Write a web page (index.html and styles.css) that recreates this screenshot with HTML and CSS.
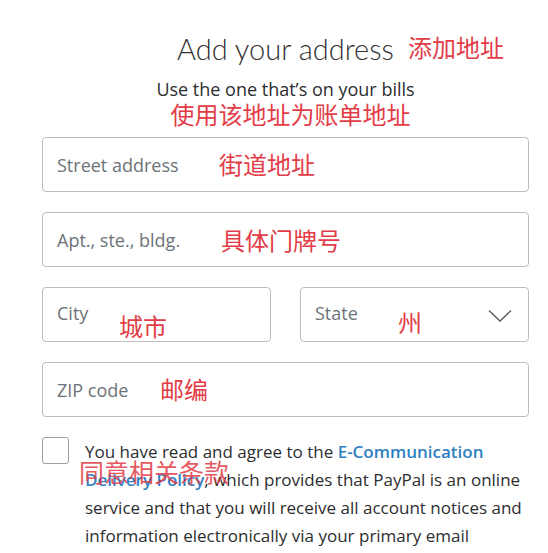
FILE: index.html
```html
<!DOCTYPE html>
<html>
  <head>
    <title>Add your address</title>
    <meta charset="UTF-8">
    <link rel="stylesheet" href="styles.css">
  </head>
  <body>
    <div class="container">
      <div class="header">
        <h1 class="title">Add your address<span class="note note-title">添加地址</span></h1>
        <p class="subtitle">Use the one that’s on your bills</p>
        <p class="note-sub">使用该地址为账单地址</p>
      </div>

      <div class="field">
        <span class="placeholder">Street address</span>
        <span class="note note-street">街道地址</span>
      </div>
      <div class="field">
        <span class="placeholder">Apt., ste., bldg.</span>
        <span class="note note-apt">具体门牌号</span>
      </div>
      <div class="row">
        <div class="field">
          <span class="placeholder">City</span>
          <span class="note note-city">城市</span>
        </div>
        <div class="field field-select">
          <span class="placeholder">State</span>
          <span class="note note-state">州</span>
          <svg class="chevron" width="24" height="14" viewBox="0 0 24 14">
            <polyline points="1,1.5 12,12 23,1.5" fill="none" stroke="#5a5a5a" stroke-width="1.4"/>
          </svg>
        </div>
      </div>
      <div class="field">
        <span class="placeholder">ZIP code</span>
        <span class="note note-zip">邮编</span>
      </div>

      <div class="agree">
        <span class="checkbox"></span>
        <p class="agree-text">You have read and agree to the <a href="#">E-Communication Delivery Policy</a>, which provides that PayPal is an online service and that you will receive all account notices and information electronically via your primary email</p>
        <span class="note note-agree">同意相关条款</span>
      </div>
    </div>
  </body>
</html>
```

FILE: styles.css
```css
body {
  margin: 0;
  padding: 0;
  background-color: #fff;
  font-family: "Open Sans", "Noto Sans", sans-serif;
  color: #2c2e2f;
}

.container {
  width: 487px;
  padding: 0 0 0 42px;
}

.header {
  text-align: center;
  padding-top: 31px;
  margin-bottom: 9px;
}

.title {
  position: relative;
  display: inline-block;
  margin: 0;
  font-family: Lato, sans-serif;
  font-size: 29px;
  font-weight: 300;
  line-height: 36px;
  color: #333;
}

.subtitle {
  margin: 11px 0 0;
  font-size: 18px;
  line-height: 22px;
  color: #2c2e2f;
}

.note {
  position: absolute;
  font-family: "Noto Sans CJK SC", sans-serif;
  font-size: 24px;
  line-height: 24px;
  font-weight: 400;
  color: #e23d47;
  white-space: nowrap;
}

.note-title {
  left: 231px;
  top: 4px;
}

.note-sub {
  margin: 0 0 0 10px;
  font-family: "Noto Sans CJK SC", sans-serif;
  font-size: 24px;
  line-height: 28px;
  color: #e23d47;
}

.field {
  position: relative;
  box-sizing: border-box;
  height: 55px;
  margin-bottom: 20px;
  padding: 0 14px;
  display: flex;
  align-items: center;
  border: 1px solid #bcbcbc;
  border-radius: 4px;
}

.placeholder {
  font-size: 18px;
  color: #6c7378;
}

.row {
  display: flex;
  gap: 29px;
}

.row .field {
  flex: 1;
}

.field-select {
  justify-content: space-between;
}

.row .placeholder {
  margin-top: -3px;
}

.chevron {
  margin-right: 2px;
  margin-top: 2px;
}

.note-street {
  left: 176px;
  top: 14px;
}

.note-apt {
  left: 178px;
  top: 15px;
}

.note-city {
  left: 76px;
  top: 26px;
}

.note-state {
  left: 97px;
  top: 22px;
}

.note-zip {
  left: 117px;
  top: 14px;
}

.agree {
  position: relative;
  display: flex;
  align-items: flex-start;
  gap: 16px;
}

.checkbox {
  flex: none;
  box-sizing: border-box;
  width: 27px;
  height: 27px;
  border: 1px solid #9e9e9e;
  border-radius: 3px;
}

.agree-text {
  margin: 1px 0 0;
  width: 445px;
  font-size: 17px;
  line-height: 28px;
  color: #2c2e2f;
}

.agree-text a {
  color: #2f80c2;
  font-weight: 600;
  text-decoration: none;
}

.note-agree {
  left: 37px;
  top: 22px;
  font-size: 25px;
  line-height: 25px;
  opacity: 0.85;
}
```
